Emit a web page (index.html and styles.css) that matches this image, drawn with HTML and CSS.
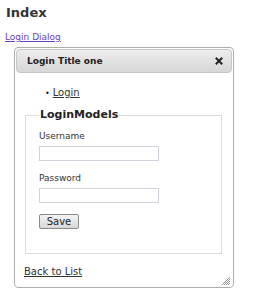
FILE: index.html
```html
<!DOCTYPE html>
<html lang="en">

<head>
    <meta charset="utf-8">
    <title>Index</title>
    <link rel="stylesheet" href="styles.css">
</head>

<body>
    <div class="page">
        <h1>Index</h1>
        <a href="#" class="dialog_link">Login Dialog</a>

        <div class="dialog">
            <div class="titlebar">
                <span class="title">Login Title one</span>
                <span class="close">
                    <svg width="8" height="8" viewBox="0 0 8 8">
                        <path d="M1.5 1.5 L6.5 6.5 M6.5 1.5 L1.5 6.5" stroke="#222" stroke-width="2" stroke-linecap="square" />
                    </svg>
                </span>
            </div>
            <div class="content">
                <ul class="menu">
                    <li><a href="#">Login</a></li>
                </ul>

                <fieldset>
                    <legend>LoginModels</legend>
                    <label for="username">Username</label>
                    <input type="text" id="username">
                    <label for="password">Password</label>
                    <input type="password" id="password">
                    <button type="button">Save</button>
                </fieldset>

                <a href="#" class="back">Back to List</a>
            </div>
            <svg class="resize" width="8" height="8" viewBox="0 0 8 8">
                <path d="M8 0 L0 8 M8 2 L2 8 M8 4 L4 8 M8 6 L6 8" stroke="#777" stroke-width="0.8" />
            </svg>
        </div>
    </div>
</body>

</html>
```

FILE: styles.css
```css
body {
    margin: 0;
    background-color: white;
    font-family: "DejaVu Sans", Verdana, sans-serif;
    color: #232323;
}

.page {
    padding: 0 0 0 5px;
    font-size: 9px;
    line-height: 12px;
}

h1 {
    font-size: 13px;
    line-height: 16px;
    font-weight: bold;
    color: #333;
    margin: 5px 0 0 1px;
}

.dialog_link {
    display: inline-block;
    font-size: 9px;
    line-height: 12px;
    color: #6c3fb8;
    margin: 10px 0 0 0;
    vertical-align: top;
}

.dialog {
    position: relative;
    width: 216px;
    height: 237px;
    margin: 4px 0 0 9px;
    padding: 1px;
    border: 1px solid #adadad;
    border-radius: 4px;
    background-color: white;
}

.titlebar {
    display: flex;
    align-items: center;
    justify-content: space-between;
    height: 22px;
    padding: 0 8px 0 10px;
    border: 1px solid #c6c6c6;
    border-radius: 4px;
    background: linear-gradient(#ededed, #d6d6d6);
}

.title {
    font-size: 9px;
    font-weight: bold;
    color: #222;
}

.close {
    display: flex;
}

.menu {
    margin: 14px 0 0 0;
    padding: 0 0 0 29px;
    font-size: 10px;
    line-height: 12px;
    list-style: none;
}

.menu li::before {
    content: "•";
    font-size: 8px;
    margin-right: 3px;
}

.menu a,
.back {
    color: #333;
}

fieldset {
    margin: 8px 10px 0 9px;
    padding: 8px 12px 24px 13px;
    border: 1px solid #dcdcdc;
}

legend {
    font-size: 11px;
    line-height: 13px;
    font-weight: bold;
    color: #222;
    padding: 0 1px 1px 1px;
}

label {
    display: block;
    font-size: 9px;
    line-height: 12px;
    color: #333;
}

input {
    display: block;
    box-sizing: border-box;
    width: 120px;
    height: 15px;
    margin: 4px 0 11px 0;
    border: 1px solid #d0d4dc;
    padding: 0 2px;
}

button {
    display: block;
    box-sizing: border-box;
    width: 40px;
    height: 15px;
    padding: 0;
    font-family: "DejaVu Sans", Verdana, sans-serif;
    font-size: 10px;
    color: #222;
    border: 1px solid #8a8a8a;
    border-radius: 2px;
    background: linear-gradient(#f4f4f4, #d8d8d8);
}

.back {
    display: inline-block;
    font-size: 10px;
    line-height: 12px;
    margin: 12px 0 0 8px;
}

.resize {
    position: absolute;
    right: 3px;
    bottom: 2px;
}
```
